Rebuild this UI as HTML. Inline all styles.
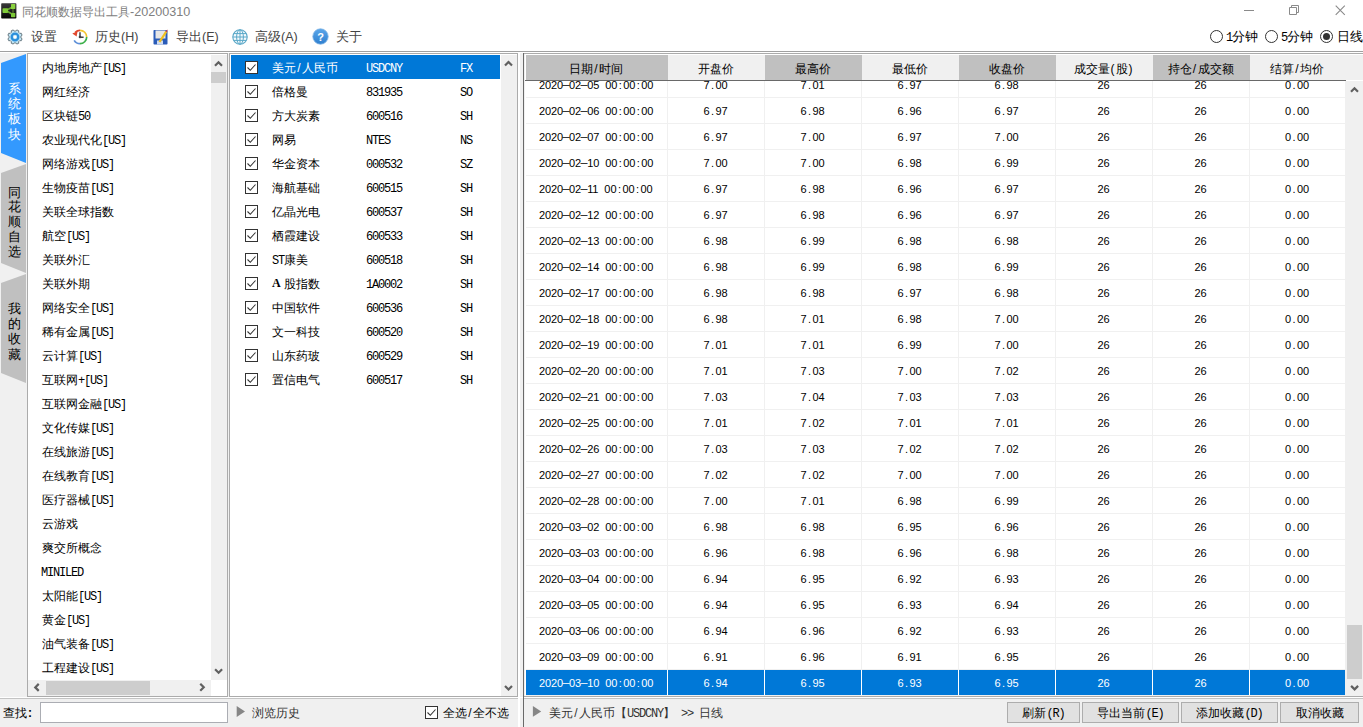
<!DOCTYPE html><html><head><meta charset="utf-8"><style>
*{margin:0;padding:0;box-sizing:border-box}
html,body{width:1363px;height:727px;overflow:hidden;background:#f0f0f0;font-family:"Liberation Sans",sans-serif;font-size:12px;color:#000}
.ab{position:absolute}
.t{position:absolute;white-space:nowrap;line-height:14px}
.cjk{font-family:"Liberation Sans",sans-serif}
.m{font-family:"Liberation Mono",monospace}
.lm{font-family:"Liberation Mono",monospace;font-size:12px;letter-spacing:-1.2px}
.c{display:inline-block;width:6px;text-align:center}
.n{font-size:11px;letter-spacing:-0.1px}

</style></head><body>
<div class="ab" style="left:0;top:0;width:1363px;height:51px;background:#fff"></div>
<div class="ab" style="left:0;top:51px;width:1363px;height:1px;background:#a0a0a0"></div>
<div class="ab" style="left:0;top:52px;width:1363px;height:1px;background:#fff"></div>
<svg class="ab" style="left:1px;top:3px" width="16" height="16" viewBox="0 0 16 16">
<defs><linearGradient id="lg" x1="0" y1="0" x2="0" y2="1"><stop offset="0" stop-color="#3a3a3a"/><stop offset="1" stop-color="#050505"/></linearGradient></defs>
<rect x="0.2" y="0.3" width="15.2" height="15.3" rx="0.8" fill="url(#lg)"/>
<path d="M5 7.5 L10.5 4.5 M5 7.5 L10.5 10.8" stroke="#6aa833" stroke-width="1.6"/>
<path d="M12 5 V11" stroke="#4a6a2a" stroke-width="1.6"/>
<rect x="10" y="1" width="4.3" height="5" rx="0.6" fill="#8ad23e"/>
<rect x="10" y="10" width="4.3" height="4.2" rx="0.6" fill="#7cc836"/>
<rect x="1.5" y="5.3" width="5.5" height="4.7" rx="0.8" fill="#80cc3a"/>
</svg>
<div class="t" style="left:22px;top:5px;font-size:12px;color:#808080">同花顺数据导出工具<span style="font-size:12.6px">-20200310</span></div>
<div class="ab" style="left:1244px;top:10px;width:10px;height:1px;background:#8a8a8a"></div>
<svg class="ab" style="left:1289px;top:5px" width="11" height="11" viewBox="0 0 11 11"><path d="M0.5 2.5h7v7h-7z M2.5 2.5v-2h7v7h-2" fill="none" stroke="#8a8a8a" stroke-width="1"/></svg>
<svg class="ab" style="left:1335px;top:5px" width="11" height="11" viewBox="0 0 11 11"><path d="M0.7 0.7L9.8 9.8M9.8 0.7L0.7 9.8" stroke="#8a8a8a" stroke-width="1.1"/></svg>
<svg class="ab" style="left:7px;top:29px" width="16" height="16" viewBox="0 0 16 16">
<path d="M13.94 8.85 L15.09 9.75 L14.25 11.77 L12.80 11.60 L11.60 12.80 L11.77 14.25 L9.75 15.09 L8.85 13.94 L7.15 13.94 L6.25 15.09 L4.23 14.25 L4.40 12.80 L3.20 11.60 L1.75 11.77 L0.91 9.75 L2.06 8.85 L2.06 7.15 L0.91 6.25 L1.75 4.23 L3.20 4.40 L4.40 3.20 L4.23 1.75 L6.25 0.91 L7.15 2.06 L8.85 2.06 L9.75 0.91 L11.77 1.75 L11.60 3.20 L12.80 4.40 L14.25 4.23 L15.09 6.25 L13.94 7.15 Z" fill="#bfe4f4" stroke="#5f6f78" stroke-width="0.9"/>
<circle cx="8" cy="8" r="3.3" fill="none" stroke="#2a8fdc" stroke-width="2.3"/><rect x="6.8" y="6.8" width="2.4" height="2.4" fill="#fff"/></svg>
<div class="t" style="left:31px;top:30px;color:#444;font-size:12.5px">设置</div>
<svg class="ab" style="left:72px;top:29px" width="16" height="16" viewBox="0 0 16 16">
<path d="M8 1.3 A6.7 6.7 0 0 1 14.7 8" fill="none" stroke="#f3c431" stroke-width="1.7"/>
<path d="M14.7 8 A6.7 6.7 0 0 1 8 14.7" fill="none" stroke="#3db04b" stroke-width="1.7"/>
<path d="M8 14.7 A6.7 6.7 0 0 1 2.2 11.3" fill="none" stroke="#5d8fd8" stroke-width="1.7"/>
<path d="M8 1.3 A6.7 6.7 0 0 0 3.2 3.3" fill="none" stroke="#e2482d" stroke-width="1.7"/>
<path d="M0.3 4.6 L5.6 2.2 L4.6 7.6 Z" fill="#e2482d"/>
<path d="M8 3.3 V8.2 H11.6" fill="none" stroke="#404040" stroke-width="1.5"/><circle cx="8" cy="8" r="1.3" fill="#404040"/></svg>
<div class="t" style="left:95px;top:30px;color:#444;font-size:12.5px">历史(H)</div>
<svg class="ab" style="left:153px;top:29px" width="16" height="16" viewBox="0 0 16 16">
<rect x="0.5" y="1" width="14" height="14.5" rx="0.8" fill="#2a5cb8"/>
<rect x="2.5" y="1.5" width="10" height="8" fill="#e6e6e6"/>
<rect x="4" y="11.5" width="6" height="4" fill="#d0dcf0"/>
<path d="M6.5 13 L13.2 2.6" stroke="#f0c020" stroke-width="2.2"/>
<path d="M12.4 2.2 L14.4 0.6 L14.2 3.3 Z" fill="#e04040"/></svg>
<div class="t" style="left:176px;top:30px;color:#444;font-size:12.5px">导出(E)</div>
<svg class="ab" style="left:232px;top:29px" width="16" height="16" viewBox="0 0 16 16">
<circle cx="8" cy="8" r="7.2" fill="#f4fafd" stroke="#5aa8c8" stroke-width="1.1"/>
<ellipse cx="8" cy="8" rx="3.4" ry="7.2" fill="none" stroke="#5aa8c8" stroke-width="1"/>
<path d="M0.8 8H15.2M1.8 4.6H14.2M1.8 11.4H14.2M8 0.8V15.2" stroke="#5aa8c8" stroke-width="1"/></svg>
<div class="t" style="left:255px;top:30px;color:#444;font-size:12.5px">高级(A)</div>
<svg class="ab" style="left:312px;top:28px" width="17" height="17" viewBox="0 0 17 17">
<defs><linearGradient id="hg" x1="0" y1="0" x2="0" y2="1"><stop offset="0" stop-color="#5aa6ea"/><stop offset="1" stop-color="#2f7fcf"/></linearGradient></defs>
<circle cx="8.5" cy="8.5" r="7.7" fill="url(#hg)" stroke="#7fb4e4" stroke-width="0.8"/>
<text x="8.5" y="12.8" text-anchor="middle" font-family="Liberation Sans" font-weight="bold" font-size="11" fill="#fff">?</text></svg>
<div class="t" style="left:336px;top:30px;color:#444;font-size:12.5px">关于</div>
<div class="ab" style="left:1210px;top:30px;width:13px;height:13px;border:1px solid #333;border-radius:50%;background:#fff"></div>
<div class="t" style="left:1226px;top:30px;font-size:12.5px"><span class="lm">1</span>分钟</div>
<div class="ab" style="left:1265px;top:30px;width:13px;height:13px;border:1px solid #333;border-radius:50%;background:#fff"></div>
<div class="t" style="left:1281px;top:30px;font-size:12.5px"><span class="lm">5</span>分钟</div>
<div class="ab" style="left:1320px;top:30px;width:13px;height:13px;border:1px solid #333;border-radius:50%;background:#fff"></div>
<div class="ab" style="left:1323px;top:33px;width:7px;height:7px;border-radius:50%;background:#333"></div>
<div class="t" style="left:1337px;top:30px;font-size:12.5px">日线</div>
<svg class="ab" style="left:0;top:54px" width="27" height="110"><path d="M1 9 L26 0 L26 109 L1 99 Z" fill="#3399fe"/></svg>
<div class="t" style="left:8px;top:82px;width:13px;font-size:13px;line-height:14px;color:#fff">系</div>
<div class="t" style="left:8px;top:97px;width:13px;font-size:13px;line-height:14px;color:#fff">统</div>
<div class="t" style="left:8px;top:112px;width:13px;font-size:13px;line-height:14px;color:#fff">板</div>
<div class="t" style="left:8px;top:128px;width:13px;font-size:13px;line-height:14px;color:#fff">块</div>
<svg class="ab" style="left:0;top:164px" width="27" height="110"><path d="M1 9 L26 0 L26 109 L1 99 Z" fill="#c0c0c0"/></svg>
<div class="t" style="left:8px;top:186px;width:13px;font-size:13px;line-height:14px;color:#000">同</div>
<div class="t" style="left:8px;top:200px;width:13px;font-size:13px;line-height:14px;color:#000">花</div>
<div class="t" style="left:8px;top:215px;width:13px;font-size:13px;line-height:14px;color:#000">顺</div>
<div class="t" style="left:8px;top:230px;width:13px;font-size:13px;line-height:14px;color:#000">自</div>
<div class="t" style="left:8px;top:245px;width:13px;font-size:13px;line-height:14px;color:#000">选</div>
<svg class="ab" style="left:0;top:274px" width="27" height="110"><path d="M1 9 L26 0 L26 109 L1 99 Z" fill="#c0c0c0"/></svg>
<div class="t" style="left:8px;top:302px;width:13px;font-size:13px;line-height:14px;color:#000">我</div>
<div class="t" style="left:8px;top:317px;width:13px;font-size:13px;line-height:14px;color:#000">的</div>
<div class="t" style="left:8px;top:332px;width:13px;font-size:13px;line-height:14px;color:#000">收</div>
<div class="t" style="left:8px;top:348px;width:13px;font-size:13px;line-height:14px;color:#000">藏</div>
<div class="ab" style="left:27px;top:53px;width:201px;height:644px;border:1px solid #ababab;background:#fff"></div>
<div class="t" style="left:42px;top:61px">内地房地产<span class="lm">[US]</span></div>
<div class="t" style="left:42px;top:85px">网红经济</div>
<div class="t" style="left:42px;top:109px">区块链<span class="lm">50</span></div>
<div class="t" style="left:42px;top:133px">农业现代化<span class="lm">[US]</span></div>
<div class="t" style="left:42px;top:157px">网络游戏<span class="lm">[US]</span></div>
<div class="t" style="left:42px;top:181px">生物疫苗<span class="lm">[US]</span></div>
<div class="t" style="left:42px;top:205px">关联全球指数</div>
<div class="t" style="left:42px;top:229px">航空<span class="lm">[US]</span></div>
<div class="t" style="left:42px;top:253px">关联外汇</div>
<div class="t" style="left:42px;top:277px">关联外期</div>
<div class="t" style="left:42px;top:301px">网络安全<span class="lm">[US]</span></div>
<div class="t" style="left:42px;top:325px">稀有金属<span class="lm">[US]</span></div>
<div class="t" style="left:42px;top:349px">云计算<span class="lm">[US]</span></div>
<div class="t" style="left:42px;top:373px">互联网<span class="lm">+[US]</span></div>
<div class="t" style="left:42px;top:397px">互联网金融<span class="lm">[US]</span></div>
<div class="t" style="left:42px;top:421px">文化传媒<span class="lm">[US]</span></div>
<div class="t" style="left:42px;top:445px">在线旅游<span class="lm">[US]</span></div>
<div class="t" style="left:42px;top:469px">在线教育<span class="lm">[US]</span></div>
<div class="t" style="left:42px;top:493px">医疗器械<span class="lm">[US]</span></div>
<div class="t" style="left:42px;top:517px">云游戏</div>
<div class="t" style="left:42px;top:541px">爽交所概念</div>
<div class="t" style="left:41px;top:565px"><span class="lm">MINILED</span></div>
<div class="t" style="left:42px;top:589px">太阳能<span class="lm">[US]</span></div>
<div class="t" style="left:42px;top:613px">黄金<span class="lm">[US]</span></div>
<div class="t" style="left:42px;top:637px">油气装备<span class="lm">[US]</span></div>
<div class="t" style="left:42px;top:661px">工程建设<span class="lm">[US]</span></div>
<div class="ab" style="left:211px;top:55px;width:16px;height:625px;background:#f0f0f0"></div>
<div class="ab" style="left:211px;top:72px;width:15px;height:11px;background:#cdcdcd"></div>
<div class="ab" style="left:28px;top:680px;width:183px;height:16px;background:#f0f0f0"></div>
<div class="ab" style="left:46px;top:681px;width:104px;height:14px;background:#cdcdcd"></div>
<div class="ab" style="left:211px;top:680px;width:16px;height:16px;background:#fff"></div>
<svg class="ab" style="left:212px;top:58px" width="12" height="12" viewBox="0 0 12 12"><g transform="translate(6.5 6)"><path d="M-3.5 1.75 L0 -1.75 L3.5 1.75" fill="none" stroke="#606060" stroke-width="2.2"/></g></svg>
<svg class="ab" style="left:212px;top:665px" width="12" height="12" viewBox="0 0 12 12"><g transform="translate(6.599999999999994 6)"><path d="M-3.5 -1.75 L0 1.75 L3.5 -1.75" fill="none" stroke="#606060" stroke-width="2.2"/></g></svg>
<svg class="ab" style="left:31px;top:681px" width="12" height="12" viewBox="0 0 12 12"><g transform="translate(6 6.399999999999977)"><path d="M1.75 -3.5 L-1.75 0 L1.75 3.5" fill="none" stroke="#606060" stroke-width="2.2"/></g></svg>
<svg class="ab" style="left:196px;top:681px" width="12" height="12" viewBox="0 0 12 12"><g transform="translate(6 6.2999999999999545)"><path d="M-1.75 -3.5 L1.75 0 L-1.75 3.5" fill="none" stroke="#606060" stroke-width="2.2"/></g></svg>
<div class="ab" style="left:229px;top:53px;width:289px;height:644px;border:1px solid #ababab;background:#fff"></div>
<div class="ab" style="left:231px;top:55px;width:269px;height:24px;background:#0078d7"></div>
<div class="ab" style="left:245px;top:61px;width:13px;height:13px;border:1px solid #333;background:#fff"></div>
<svg class="ab" style="left:246px;top:62px" width="11" height="11" viewBox="0 0 11 11"><path d="M1.5 5.5 L4.3 8.3 L9.5 2.5" fill="none" stroke="#333" stroke-width="1.1"/></svg>
<div class="t" style="left:272px;top:61px;color:#fff">美元<span class="c">/</span>人民币</div>
<div class="t m" style="left:366px;top:62px;color:#fff;font-size:12px;letter-spacing:-1.2px">USDCNY</div>
<div class="t m" style="left:460px;top:62px;color:#fff;font-size:12px;letter-spacing:-1.2px">FX</div>
<div class="ab" style="left:245px;top:85px;width:13px;height:13px;border:1px solid #333;background:#fff"></div>
<svg class="ab" style="left:246px;top:86px" width="11" height="11" viewBox="0 0 11 11"><path d="M1.5 5.5 L4.3 8.3 L9.5 2.5" fill="none" stroke="#333" stroke-width="1.1"/></svg>
<div class="t" style="left:272px;top:85px;color:#000">倍格曼</div>
<div class="t m" style="left:366px;top:86px;color:#000;font-size:12px;letter-spacing:-1.2px">831935</div>
<div class="t m" style="left:460px;top:86px;color:#000;font-size:12px;letter-spacing:-1.2px">SO</div>
<div class="ab" style="left:245px;top:109px;width:13px;height:13px;border:1px solid #333;background:#fff"></div>
<svg class="ab" style="left:246px;top:110px" width="11" height="11" viewBox="0 0 11 11"><path d="M1.5 5.5 L4.3 8.3 L9.5 2.5" fill="none" stroke="#333" stroke-width="1.1"/></svg>
<div class="t" style="left:272px;top:109px;color:#000">方大炭素</div>
<div class="t m" style="left:366px;top:110px;color:#000;font-size:12px;letter-spacing:-1.2px">600516</div>
<div class="t m" style="left:460px;top:110px;color:#000;font-size:12px;letter-spacing:-1.2px">SH</div>
<div class="ab" style="left:245px;top:133px;width:13px;height:13px;border:1px solid #333;background:#fff"></div>
<svg class="ab" style="left:246px;top:134px" width="11" height="11" viewBox="0 0 11 11"><path d="M1.5 5.5 L4.3 8.3 L9.5 2.5" fill="none" stroke="#333" stroke-width="1.1"/></svg>
<div class="t" style="left:272px;top:133px;color:#000">网易</div>
<div class="t m" style="left:366px;top:134px;color:#000;font-size:12px;letter-spacing:-1.2px">NTES</div>
<div class="t m" style="left:460px;top:134px;color:#000;font-size:12px;letter-spacing:-1.2px">NS</div>
<div class="ab" style="left:245px;top:157px;width:13px;height:13px;border:1px solid #333;background:#fff"></div>
<svg class="ab" style="left:246px;top:158px" width="11" height="11" viewBox="0 0 11 11"><path d="M1.5 5.5 L4.3 8.3 L9.5 2.5" fill="none" stroke="#333" stroke-width="1.1"/></svg>
<div class="t" style="left:272px;top:157px;color:#000">华金资本</div>
<div class="t m" style="left:366px;top:158px;color:#000;font-size:12px;letter-spacing:-1.2px">000532</div>
<div class="t m" style="left:460px;top:158px;color:#000;font-size:12px;letter-spacing:-1.2px">SZ</div>
<div class="ab" style="left:245px;top:181px;width:13px;height:13px;border:1px solid #333;background:#fff"></div>
<svg class="ab" style="left:246px;top:182px" width="11" height="11" viewBox="0 0 11 11"><path d="M1.5 5.5 L4.3 8.3 L9.5 2.5" fill="none" stroke="#333" stroke-width="1.1"/></svg>
<div class="t" style="left:272px;top:181px;color:#000">海航基础</div>
<div class="t m" style="left:366px;top:182px;color:#000;font-size:12px;letter-spacing:-1.2px">600515</div>
<div class="t m" style="left:460px;top:182px;color:#000;font-size:12px;letter-spacing:-1.2px">SH</div>
<div class="ab" style="left:245px;top:205px;width:13px;height:13px;border:1px solid #333;background:#fff"></div>
<svg class="ab" style="left:246px;top:206px" width="11" height="11" viewBox="0 0 11 11"><path d="M1.5 5.5 L4.3 8.3 L9.5 2.5" fill="none" stroke="#333" stroke-width="1.1"/></svg>
<div class="t" style="left:272px;top:205px;color:#000">亿晶光电</div>
<div class="t m" style="left:366px;top:206px;color:#000;font-size:12px;letter-spacing:-1.2px">600537</div>
<div class="t m" style="left:460px;top:206px;color:#000;font-size:12px;letter-spacing:-1.2px">SH</div>
<div class="ab" style="left:245px;top:229px;width:13px;height:13px;border:1px solid #333;background:#fff"></div>
<svg class="ab" style="left:246px;top:230px" width="11" height="11" viewBox="0 0 11 11"><path d="M1.5 5.5 L4.3 8.3 L9.5 2.5" fill="none" stroke="#333" stroke-width="1.1"/></svg>
<div class="t" style="left:272px;top:229px;color:#000">栖霞建设</div>
<div class="t m" style="left:366px;top:230px;color:#000;font-size:12px;letter-spacing:-1.2px">600533</div>
<div class="t m" style="left:460px;top:230px;color:#000;font-size:12px;letter-spacing:-1.2px">SH</div>
<div class="ab" style="left:245px;top:253px;width:13px;height:13px;border:1px solid #333;background:#fff"></div>
<svg class="ab" style="left:246px;top:254px" width="11" height="11" viewBox="0 0 11 11"><path d="M1.5 5.5 L4.3 8.3 L9.5 2.5" fill="none" stroke="#333" stroke-width="1.1"/></svg>
<div class="t" style="left:272px;top:253px;color:#000"><span class="lm">ST</span>康美</div>
<div class="t m" style="left:366px;top:254px;color:#000;font-size:12px;letter-spacing:-1.2px">600518</div>
<div class="t m" style="left:460px;top:254px;color:#000;font-size:12px;letter-spacing:-1.2px">SH</div>
<div class="ab" style="left:245px;top:277px;width:13px;height:13px;border:1px solid #333;background:#fff"></div>
<svg class="ab" style="left:246px;top:278px" width="11" height="11" viewBox="0 0 11 11"><path d="M1.5 5.5 L4.3 8.3 L9.5 2.5" fill="none" stroke="#333" stroke-width="1.1"/></svg>
<div class="t" style="left:272px;top:277px;color:#000"><span style="display:inline-block;width:12px;font:bold 12px 'Liberation Serif';position:relative;top:-1px">A</span>股指数</div>
<div class="t m" style="left:366px;top:278px;color:#000;font-size:12px;letter-spacing:-1.2px">1A0002</div>
<div class="t m" style="left:460px;top:278px;color:#000;font-size:12px;letter-spacing:-1.2px">SH</div>
<div class="ab" style="left:245px;top:301px;width:13px;height:13px;border:1px solid #333;background:#fff"></div>
<svg class="ab" style="left:246px;top:302px" width="11" height="11" viewBox="0 0 11 11"><path d="M1.5 5.5 L4.3 8.3 L9.5 2.5" fill="none" stroke="#333" stroke-width="1.1"/></svg>
<div class="t" style="left:272px;top:301px;color:#000">中国软件</div>
<div class="t m" style="left:366px;top:302px;color:#000;font-size:12px;letter-spacing:-1.2px">600536</div>
<div class="t m" style="left:460px;top:302px;color:#000;font-size:12px;letter-spacing:-1.2px">SH</div>
<div class="ab" style="left:245px;top:325px;width:13px;height:13px;border:1px solid #333;background:#fff"></div>
<svg class="ab" style="left:246px;top:326px" width="11" height="11" viewBox="0 0 11 11"><path d="M1.5 5.5 L4.3 8.3 L9.5 2.5" fill="none" stroke="#333" stroke-width="1.1"/></svg>
<div class="t" style="left:272px;top:325px;color:#000">文一科技</div>
<div class="t m" style="left:366px;top:326px;color:#000;font-size:12px;letter-spacing:-1.2px">600520</div>
<div class="t m" style="left:460px;top:326px;color:#000;font-size:12px;letter-spacing:-1.2px">SH</div>
<div class="ab" style="left:245px;top:349px;width:13px;height:13px;border:1px solid #333;background:#fff"></div>
<svg class="ab" style="left:246px;top:350px" width="11" height="11" viewBox="0 0 11 11"><path d="M1.5 5.5 L4.3 8.3 L9.5 2.5" fill="none" stroke="#333" stroke-width="1.1"/></svg>
<div class="t" style="left:272px;top:349px;color:#000">山东药玻</div>
<div class="t m" style="left:366px;top:350px;color:#000;font-size:12px;letter-spacing:-1.2px">600529</div>
<div class="t m" style="left:460px;top:350px;color:#000;font-size:12px;letter-spacing:-1.2px">SH</div>
<div class="ab" style="left:245px;top:373px;width:13px;height:13px;border:1px solid #333;background:#fff"></div>
<svg class="ab" style="left:246px;top:374px" width="11" height="11" viewBox="0 0 11 11"><path d="M1.5 5.5 L4.3 8.3 L9.5 2.5" fill="none" stroke="#333" stroke-width="1.1"/></svg>
<div class="t" style="left:272px;top:373px;color:#000">置信电气</div>
<div class="t m" style="left:366px;top:374px;color:#000;font-size:12px;letter-spacing:-1.2px">600517</div>
<div class="t m" style="left:460px;top:374px;color:#000;font-size:12px;letter-spacing:-1.2px">SH</div>
<div class="ab" style="left:501px;top:55px;width:16px;height:641px;background:#f0f0f0"></div>
<svg class="ab" style="left:502px;top:57px" width="12" height="12" viewBox="0 0 12 12"><g transform="translate(6.5 6.799999999999997)"><path d="M-3.5 1.75 L0 -1.75 L3.5 1.75" fill="none" stroke="#606060" stroke-width="2.2"/></g></svg>
<svg class="ab" style="left:502px;top:681px" width="12" height="12" viewBox="0 0 12 12"><g transform="translate(6.5 6.7999999999999545)"><path d="M-3.5 -1.75 L0 1.75 L3.5 -1.75" fill="none" stroke="#606060" stroke-width="2.2"/></g></svg>
<div class="ab" style="left:523px;top:53px;width:1px;height:674px;background:#696969"></div>
<div class="ab" style="left:524px;top:53px;width:839px;height:1px;background:#ababab"></div>
<div class="ab" style="left:525px;top:54px;width:838px;height:643px;background:#fff"></div>
<div class="ab" style="left:526px;top:55px;width:837px;height:25px;background:#f0f0f0"></div>
<div class="ab" style="left:526px;top:55px;width:142px;height:25px;background:#c0c0c0"></div>
<div class="t" style="left:525px;top:62px;width:142px;text-align:center">日期<span class="c">/</span>时间</div>
<div class="ab" style="left:668px;top:55px;width:97px;height:25px;background:#f0f0f0"></div>
<div class="t" style="left:667px;top:62px;width:97px;text-align:center">开盘价</div>
<div class="ab" style="left:765px;top:55px;width:97px;height:25px;background:#c0c0c0"></div>
<div class="t" style="left:764px;top:62px;width:97px;text-align:center">最高价</div>
<div class="ab" style="left:862px;top:55px;width:97px;height:25px;background:#f0f0f0"></div>
<div class="t" style="left:861px;top:62px;width:97px;text-align:center">最低价</div>
<div class="ab" style="left:959px;top:55px;width:97px;height:25px;background:#c0c0c0"></div>
<div class="t" style="left:958px;top:62px;width:97px;text-align:center">收盘价</div>
<div class="ab" style="left:1056px;top:55px;width:97px;height:25px;background:#f0f0f0"></div>
<div class="t" style="left:1055px;top:62px;width:97px;text-align:center">成交量<span class="c">(</span>股<span class="c">)</span></div>
<div class="ab" style="left:1153px;top:55px;width:97px;height:25px;background:#c0c0c0"></div>
<div class="t" style="left:1152px;top:62px;width:97px;text-align:center">持仓<span class="c">/</span>成交额</div>
<div class="ab" style="left:1250px;top:55px;width:96px;height:25px;background:#f0f0f0"></div>
<div class="t" style="left:1249px;top:62px;width:96px;text-align:center">结算<span class="c">/</span>均价</div>
<div class="ab" style="left:0;top:81px;width:1363px;height:615px;overflow:hidden">
<div class="t n" style="left:539px;top:-3px;color:#000">2020<span class="c" style="position:relative;top:-1.5px;transform:scaleX(1.15)">–</span>02<span class="c" style="position:relative;top:-1.5px;transform:scaleX(1.15)">–</span>05<span class="c">&nbsp;</span>00<span class="c">:</span>00<span class="c">:</span>00</div>
<div class="t n" style="left:667px;top:-3px;width:97px;text-align:center;color:#000">7<span class="c">.</span>00</div>
<div class="t n" style="left:764px;top:-3px;width:97px;text-align:center;color:#000">7<span class="c">.</span>01</div>
<div class="t n" style="left:861px;top:-3px;width:97px;text-align:center;color:#000">6<span class="c">.</span>97</div>
<div class="t n" style="left:958px;top:-3px;width:97px;text-align:center;color:#000">6<span class="c">.</span>98</div>
<div class="t n" style="left:1055px;top:-3px;width:97px;text-align:center;color:#000">26</div>
<div class="t n" style="left:1152px;top:-3px;width:97px;text-align:center;color:#000">26</div>
<div class="t n" style="left:1249px;top:-3px;width:96px;text-align:center;color:#000">0<span class="c">.</span>00</div>
<div class="ab" style="left:526px;top:16px;width:820px;height:1px;background:#f0f0f0"></div>
<div class="t n" style="left:539px;top:23px;color:#000">2020<span class="c" style="position:relative;top:-1.5px;transform:scaleX(1.15)">–</span>02<span class="c" style="position:relative;top:-1.5px;transform:scaleX(1.15)">–</span>06<span class="c">&nbsp;</span>00<span class="c">:</span>00<span class="c">:</span>00</div>
<div class="t n" style="left:667px;top:23px;width:97px;text-align:center;color:#000">6<span class="c">.</span>97</div>
<div class="t n" style="left:764px;top:23px;width:97px;text-align:center;color:#000">6<span class="c">.</span>98</div>
<div class="t n" style="left:861px;top:23px;width:97px;text-align:center;color:#000">6<span class="c">.</span>96</div>
<div class="t n" style="left:958px;top:23px;width:97px;text-align:center;color:#000">6<span class="c">.</span>97</div>
<div class="t n" style="left:1055px;top:23px;width:97px;text-align:center;color:#000">26</div>
<div class="t n" style="left:1152px;top:23px;width:97px;text-align:center;color:#000">26</div>
<div class="t n" style="left:1249px;top:23px;width:96px;text-align:center;color:#000">0<span class="c">.</span>00</div>
<div class="ab" style="left:526px;top:42px;width:820px;height:1px;background:#f0f0f0"></div>
<div class="t n" style="left:539px;top:49px;color:#000">2020<span class="c" style="position:relative;top:-1.5px;transform:scaleX(1.15)">–</span>02<span class="c" style="position:relative;top:-1.5px;transform:scaleX(1.15)">–</span>07<span class="c">&nbsp;</span>00<span class="c">:</span>00<span class="c">:</span>00</div>
<div class="t n" style="left:667px;top:49px;width:97px;text-align:center;color:#000">6<span class="c">.</span>97</div>
<div class="t n" style="left:764px;top:49px;width:97px;text-align:center;color:#000">7<span class="c">.</span>00</div>
<div class="t n" style="left:861px;top:49px;width:97px;text-align:center;color:#000">6<span class="c">.</span>97</div>
<div class="t n" style="left:958px;top:49px;width:97px;text-align:center;color:#000">7<span class="c">.</span>00</div>
<div class="t n" style="left:1055px;top:49px;width:97px;text-align:center;color:#000">26</div>
<div class="t n" style="left:1152px;top:49px;width:97px;text-align:center;color:#000">26</div>
<div class="t n" style="left:1249px;top:49px;width:96px;text-align:center;color:#000">0<span class="c">.</span>00</div>
<div class="ab" style="left:526px;top:68px;width:820px;height:1px;background:#f0f0f0"></div>
<div class="t n" style="left:539px;top:75px;color:#000">2020<span class="c" style="position:relative;top:-1.5px;transform:scaleX(1.15)">–</span>02<span class="c" style="position:relative;top:-1.5px;transform:scaleX(1.15)">–</span>10<span class="c">&nbsp;</span>00<span class="c">:</span>00<span class="c">:</span>00</div>
<div class="t n" style="left:667px;top:75px;width:97px;text-align:center;color:#000">7<span class="c">.</span>00</div>
<div class="t n" style="left:764px;top:75px;width:97px;text-align:center;color:#000">7<span class="c">.</span>00</div>
<div class="t n" style="left:861px;top:75px;width:97px;text-align:center;color:#000">6<span class="c">.</span>98</div>
<div class="t n" style="left:958px;top:75px;width:97px;text-align:center;color:#000">6<span class="c">.</span>99</div>
<div class="t n" style="left:1055px;top:75px;width:97px;text-align:center;color:#000">26</div>
<div class="t n" style="left:1152px;top:75px;width:97px;text-align:center;color:#000">26</div>
<div class="t n" style="left:1249px;top:75px;width:96px;text-align:center;color:#000">0<span class="c">.</span>00</div>
<div class="ab" style="left:526px;top:94px;width:820px;height:1px;background:#f0f0f0"></div>
<div class="t n" style="left:539px;top:101px;color:#000">2020<span class="c" style="position:relative;top:-1.5px;transform:scaleX(1.15)">–</span>02<span class="c" style="position:relative;top:-1.5px;transform:scaleX(1.15)">–</span>11<span class="c">&nbsp;</span>00<span class="c">:</span>00<span class="c">:</span>00</div>
<div class="t n" style="left:667px;top:101px;width:97px;text-align:center;color:#000">6<span class="c">.</span>97</div>
<div class="t n" style="left:764px;top:101px;width:97px;text-align:center;color:#000">6<span class="c">.</span>98</div>
<div class="t n" style="left:861px;top:101px;width:97px;text-align:center;color:#000">6<span class="c">.</span>96</div>
<div class="t n" style="left:958px;top:101px;width:97px;text-align:center;color:#000">6<span class="c">.</span>97</div>
<div class="t n" style="left:1055px;top:101px;width:97px;text-align:center;color:#000">26</div>
<div class="t n" style="left:1152px;top:101px;width:97px;text-align:center;color:#000">26</div>
<div class="t n" style="left:1249px;top:101px;width:96px;text-align:center;color:#000">0<span class="c">.</span>00</div>
<div class="ab" style="left:526px;top:120px;width:820px;height:1px;background:#f0f0f0"></div>
<div class="t n" style="left:539px;top:127px;color:#000">2020<span class="c" style="position:relative;top:-1.5px;transform:scaleX(1.15)">–</span>02<span class="c" style="position:relative;top:-1.5px;transform:scaleX(1.15)">–</span>12<span class="c">&nbsp;</span>00<span class="c">:</span>00<span class="c">:</span>00</div>
<div class="t n" style="left:667px;top:127px;width:97px;text-align:center;color:#000">6<span class="c">.</span>97</div>
<div class="t n" style="left:764px;top:127px;width:97px;text-align:center;color:#000">6<span class="c">.</span>98</div>
<div class="t n" style="left:861px;top:127px;width:97px;text-align:center;color:#000">6<span class="c">.</span>96</div>
<div class="t n" style="left:958px;top:127px;width:97px;text-align:center;color:#000">6<span class="c">.</span>97</div>
<div class="t n" style="left:1055px;top:127px;width:97px;text-align:center;color:#000">26</div>
<div class="t n" style="left:1152px;top:127px;width:97px;text-align:center;color:#000">26</div>
<div class="t n" style="left:1249px;top:127px;width:96px;text-align:center;color:#000">0<span class="c">.</span>00</div>
<div class="ab" style="left:526px;top:146px;width:820px;height:1px;background:#f0f0f0"></div>
<div class="t n" style="left:539px;top:153px;color:#000">2020<span class="c" style="position:relative;top:-1.5px;transform:scaleX(1.15)">–</span>02<span class="c" style="position:relative;top:-1.5px;transform:scaleX(1.15)">–</span>13<span class="c">&nbsp;</span>00<span class="c">:</span>00<span class="c">:</span>00</div>
<div class="t n" style="left:667px;top:153px;width:97px;text-align:center;color:#000">6<span class="c">.</span>98</div>
<div class="t n" style="left:764px;top:153px;width:97px;text-align:center;color:#000">6<span class="c">.</span>99</div>
<div class="t n" style="left:861px;top:153px;width:97px;text-align:center;color:#000">6<span class="c">.</span>98</div>
<div class="t n" style="left:958px;top:153px;width:97px;text-align:center;color:#000">6<span class="c">.</span>98</div>
<div class="t n" style="left:1055px;top:153px;width:97px;text-align:center;color:#000">26</div>
<div class="t n" style="left:1152px;top:153px;width:97px;text-align:center;color:#000">26</div>
<div class="t n" style="left:1249px;top:153px;width:96px;text-align:center;color:#000">0<span class="c">.</span>00</div>
<div class="ab" style="left:526px;top:172px;width:820px;height:1px;background:#f0f0f0"></div>
<div class="t n" style="left:539px;top:179px;color:#000">2020<span class="c" style="position:relative;top:-1.5px;transform:scaleX(1.15)">–</span>02<span class="c" style="position:relative;top:-1.5px;transform:scaleX(1.15)">–</span>14<span class="c">&nbsp;</span>00<span class="c">:</span>00<span class="c">:</span>00</div>
<div class="t n" style="left:667px;top:179px;width:97px;text-align:center;color:#000">6<span class="c">.</span>98</div>
<div class="t n" style="left:764px;top:179px;width:97px;text-align:center;color:#000">6<span class="c">.</span>99</div>
<div class="t n" style="left:861px;top:179px;width:97px;text-align:center;color:#000">6<span class="c">.</span>98</div>
<div class="t n" style="left:958px;top:179px;width:97px;text-align:center;color:#000">6<span class="c">.</span>99</div>
<div class="t n" style="left:1055px;top:179px;width:97px;text-align:center;color:#000">26</div>
<div class="t n" style="left:1152px;top:179px;width:97px;text-align:center;color:#000">26</div>
<div class="t n" style="left:1249px;top:179px;width:96px;text-align:center;color:#000">0<span class="c">.</span>00</div>
<div class="ab" style="left:526px;top:198px;width:820px;height:1px;background:#f0f0f0"></div>
<div class="t n" style="left:539px;top:205px;color:#000">2020<span class="c" style="position:relative;top:-1.5px;transform:scaleX(1.15)">–</span>02<span class="c" style="position:relative;top:-1.5px;transform:scaleX(1.15)">–</span>17<span class="c">&nbsp;</span>00<span class="c">:</span>00<span class="c">:</span>00</div>
<div class="t n" style="left:667px;top:205px;width:97px;text-align:center;color:#000">6<span class="c">.</span>98</div>
<div class="t n" style="left:764px;top:205px;width:97px;text-align:center;color:#000">6<span class="c">.</span>98</div>
<div class="t n" style="left:861px;top:205px;width:97px;text-align:center;color:#000">6<span class="c">.</span>97</div>
<div class="t n" style="left:958px;top:205px;width:97px;text-align:center;color:#000">6<span class="c">.</span>98</div>
<div class="t n" style="left:1055px;top:205px;width:97px;text-align:center;color:#000">26</div>
<div class="t n" style="left:1152px;top:205px;width:97px;text-align:center;color:#000">26</div>
<div class="t n" style="left:1249px;top:205px;width:96px;text-align:center;color:#000">0<span class="c">.</span>00</div>
<div class="ab" style="left:526px;top:224px;width:820px;height:1px;background:#f0f0f0"></div>
<div class="t n" style="left:539px;top:231px;color:#000">2020<span class="c" style="position:relative;top:-1.5px;transform:scaleX(1.15)">–</span>02<span class="c" style="position:relative;top:-1.5px;transform:scaleX(1.15)">–</span>18<span class="c">&nbsp;</span>00<span class="c">:</span>00<span class="c">:</span>00</div>
<div class="t n" style="left:667px;top:231px;width:97px;text-align:center;color:#000">6<span class="c">.</span>98</div>
<div class="t n" style="left:764px;top:231px;width:97px;text-align:center;color:#000">7<span class="c">.</span>01</div>
<div class="t n" style="left:861px;top:231px;width:97px;text-align:center;color:#000">6<span class="c">.</span>98</div>
<div class="t n" style="left:958px;top:231px;width:97px;text-align:center;color:#000">7<span class="c">.</span>00</div>
<div class="t n" style="left:1055px;top:231px;width:97px;text-align:center;color:#000">26</div>
<div class="t n" style="left:1152px;top:231px;width:97px;text-align:center;color:#000">26</div>
<div class="t n" style="left:1249px;top:231px;width:96px;text-align:center;color:#000">0<span class="c">.</span>00</div>
<div class="ab" style="left:526px;top:250px;width:820px;height:1px;background:#f0f0f0"></div>
<div class="t n" style="left:539px;top:257px;color:#000">2020<span class="c" style="position:relative;top:-1.5px;transform:scaleX(1.15)">–</span>02<span class="c" style="position:relative;top:-1.5px;transform:scaleX(1.15)">–</span>19<span class="c">&nbsp;</span>00<span class="c">:</span>00<span class="c">:</span>00</div>
<div class="t n" style="left:667px;top:257px;width:97px;text-align:center;color:#000">7<span class="c">.</span>01</div>
<div class="t n" style="left:764px;top:257px;width:97px;text-align:center;color:#000">7<span class="c">.</span>01</div>
<div class="t n" style="left:861px;top:257px;width:97px;text-align:center;color:#000">6<span class="c">.</span>99</div>
<div class="t n" style="left:958px;top:257px;width:97px;text-align:center;color:#000">7<span class="c">.</span>00</div>
<div class="t n" style="left:1055px;top:257px;width:97px;text-align:center;color:#000">26</div>
<div class="t n" style="left:1152px;top:257px;width:97px;text-align:center;color:#000">26</div>
<div class="t n" style="left:1249px;top:257px;width:96px;text-align:center;color:#000">0<span class="c">.</span>00</div>
<div class="ab" style="left:526px;top:276px;width:820px;height:1px;background:#f0f0f0"></div>
<div class="t n" style="left:539px;top:283px;color:#000">2020<span class="c" style="position:relative;top:-1.5px;transform:scaleX(1.15)">–</span>02<span class="c" style="position:relative;top:-1.5px;transform:scaleX(1.15)">–</span>20<span class="c">&nbsp;</span>00<span class="c">:</span>00<span class="c">:</span>00</div>
<div class="t n" style="left:667px;top:283px;width:97px;text-align:center;color:#000">7<span class="c">.</span>01</div>
<div class="t n" style="left:764px;top:283px;width:97px;text-align:center;color:#000">7<span class="c">.</span>03</div>
<div class="t n" style="left:861px;top:283px;width:97px;text-align:center;color:#000">7<span class="c">.</span>00</div>
<div class="t n" style="left:958px;top:283px;width:97px;text-align:center;color:#000">7<span class="c">.</span>02</div>
<div class="t n" style="left:1055px;top:283px;width:97px;text-align:center;color:#000">26</div>
<div class="t n" style="left:1152px;top:283px;width:97px;text-align:center;color:#000">26</div>
<div class="t n" style="left:1249px;top:283px;width:96px;text-align:center;color:#000">0<span class="c">.</span>00</div>
<div class="ab" style="left:526px;top:302px;width:820px;height:1px;background:#f0f0f0"></div>
<div class="t n" style="left:539px;top:309px;color:#000">2020<span class="c" style="position:relative;top:-1.5px;transform:scaleX(1.15)">–</span>02<span class="c" style="position:relative;top:-1.5px;transform:scaleX(1.15)">–</span>21<span class="c">&nbsp;</span>00<span class="c">:</span>00<span class="c">:</span>00</div>
<div class="t n" style="left:667px;top:309px;width:97px;text-align:center;color:#000">7<span class="c">.</span>03</div>
<div class="t n" style="left:764px;top:309px;width:97px;text-align:center;color:#000">7<span class="c">.</span>04</div>
<div class="t n" style="left:861px;top:309px;width:97px;text-align:center;color:#000">7<span class="c">.</span>03</div>
<div class="t n" style="left:958px;top:309px;width:97px;text-align:center;color:#000">7<span class="c">.</span>03</div>
<div class="t n" style="left:1055px;top:309px;width:97px;text-align:center;color:#000">26</div>
<div class="t n" style="left:1152px;top:309px;width:97px;text-align:center;color:#000">26</div>
<div class="t n" style="left:1249px;top:309px;width:96px;text-align:center;color:#000">0<span class="c">.</span>00</div>
<div class="ab" style="left:526px;top:328px;width:820px;height:1px;background:#f0f0f0"></div>
<div class="t n" style="left:539px;top:335px;color:#000">2020<span class="c" style="position:relative;top:-1.5px;transform:scaleX(1.15)">–</span>02<span class="c" style="position:relative;top:-1.5px;transform:scaleX(1.15)">–</span>25<span class="c">&nbsp;</span>00<span class="c">:</span>00<span class="c">:</span>00</div>
<div class="t n" style="left:667px;top:335px;width:97px;text-align:center;color:#000">7<span class="c">.</span>01</div>
<div class="t n" style="left:764px;top:335px;width:97px;text-align:center;color:#000">7<span class="c">.</span>02</div>
<div class="t n" style="left:861px;top:335px;width:97px;text-align:center;color:#000">7<span class="c">.</span>01</div>
<div class="t n" style="left:958px;top:335px;width:97px;text-align:center;color:#000">7<span class="c">.</span>01</div>
<div class="t n" style="left:1055px;top:335px;width:97px;text-align:center;color:#000">26</div>
<div class="t n" style="left:1152px;top:335px;width:97px;text-align:center;color:#000">26</div>
<div class="t n" style="left:1249px;top:335px;width:96px;text-align:center;color:#000">0<span class="c">.</span>00</div>
<div class="ab" style="left:526px;top:354px;width:820px;height:1px;background:#f0f0f0"></div>
<div class="t n" style="left:539px;top:361px;color:#000">2020<span class="c" style="position:relative;top:-1.5px;transform:scaleX(1.15)">–</span>02<span class="c" style="position:relative;top:-1.5px;transform:scaleX(1.15)">–</span>26<span class="c">&nbsp;</span>00<span class="c">:</span>00<span class="c">:</span>00</div>
<div class="t n" style="left:667px;top:361px;width:97px;text-align:center;color:#000">7<span class="c">.</span>03</div>
<div class="t n" style="left:764px;top:361px;width:97px;text-align:center;color:#000">7<span class="c">.</span>03</div>
<div class="t n" style="left:861px;top:361px;width:97px;text-align:center;color:#000">7<span class="c">.</span>02</div>
<div class="t n" style="left:958px;top:361px;width:97px;text-align:center;color:#000">7<span class="c">.</span>02</div>
<div class="t n" style="left:1055px;top:361px;width:97px;text-align:center;color:#000">26</div>
<div class="t n" style="left:1152px;top:361px;width:97px;text-align:center;color:#000">26</div>
<div class="t n" style="left:1249px;top:361px;width:96px;text-align:center;color:#000">0<span class="c">.</span>00</div>
<div class="ab" style="left:526px;top:380px;width:820px;height:1px;background:#f0f0f0"></div>
<div class="t n" style="left:539px;top:387px;color:#000">2020<span class="c" style="position:relative;top:-1.5px;transform:scaleX(1.15)">–</span>02<span class="c" style="position:relative;top:-1.5px;transform:scaleX(1.15)">–</span>27<span class="c">&nbsp;</span>00<span class="c">:</span>00<span class="c">:</span>00</div>
<div class="t n" style="left:667px;top:387px;width:97px;text-align:center;color:#000">7<span class="c">.</span>02</div>
<div class="t n" style="left:764px;top:387px;width:97px;text-align:center;color:#000">7<span class="c">.</span>02</div>
<div class="t n" style="left:861px;top:387px;width:97px;text-align:center;color:#000">7<span class="c">.</span>00</div>
<div class="t n" style="left:958px;top:387px;width:97px;text-align:center;color:#000">7<span class="c">.</span>00</div>
<div class="t n" style="left:1055px;top:387px;width:97px;text-align:center;color:#000">26</div>
<div class="t n" style="left:1152px;top:387px;width:97px;text-align:center;color:#000">26</div>
<div class="t n" style="left:1249px;top:387px;width:96px;text-align:center;color:#000">0<span class="c">.</span>00</div>
<div class="ab" style="left:526px;top:406px;width:820px;height:1px;background:#f0f0f0"></div>
<div class="t n" style="left:539px;top:413px;color:#000">2020<span class="c" style="position:relative;top:-1.5px;transform:scaleX(1.15)">–</span>02<span class="c" style="position:relative;top:-1.5px;transform:scaleX(1.15)">–</span>28<span class="c">&nbsp;</span>00<span class="c">:</span>00<span class="c">:</span>00</div>
<div class="t n" style="left:667px;top:413px;width:97px;text-align:center;color:#000">7<span class="c">.</span>00</div>
<div class="t n" style="left:764px;top:413px;width:97px;text-align:center;color:#000">7<span class="c">.</span>01</div>
<div class="t n" style="left:861px;top:413px;width:97px;text-align:center;color:#000">6<span class="c">.</span>98</div>
<div class="t n" style="left:958px;top:413px;width:97px;text-align:center;color:#000">6<span class="c">.</span>99</div>
<div class="t n" style="left:1055px;top:413px;width:97px;text-align:center;color:#000">26</div>
<div class="t n" style="left:1152px;top:413px;width:97px;text-align:center;color:#000">26</div>
<div class="t n" style="left:1249px;top:413px;width:96px;text-align:center;color:#000">0<span class="c">.</span>00</div>
<div class="ab" style="left:526px;top:432px;width:820px;height:1px;background:#f0f0f0"></div>
<div class="t n" style="left:539px;top:439px;color:#000">2020<span class="c" style="position:relative;top:-1.5px;transform:scaleX(1.15)">–</span>03<span class="c" style="position:relative;top:-1.5px;transform:scaleX(1.15)">–</span>02<span class="c">&nbsp;</span>00<span class="c">:</span>00<span class="c">:</span>00</div>
<div class="t n" style="left:667px;top:439px;width:97px;text-align:center;color:#000">6<span class="c">.</span>98</div>
<div class="t n" style="left:764px;top:439px;width:97px;text-align:center;color:#000">6<span class="c">.</span>98</div>
<div class="t n" style="left:861px;top:439px;width:97px;text-align:center;color:#000">6<span class="c">.</span>95</div>
<div class="t n" style="left:958px;top:439px;width:97px;text-align:center;color:#000">6<span class="c">.</span>96</div>
<div class="t n" style="left:1055px;top:439px;width:97px;text-align:center;color:#000">26</div>
<div class="t n" style="left:1152px;top:439px;width:97px;text-align:center;color:#000">26</div>
<div class="t n" style="left:1249px;top:439px;width:96px;text-align:center;color:#000">0<span class="c">.</span>00</div>
<div class="ab" style="left:526px;top:458px;width:820px;height:1px;background:#f0f0f0"></div>
<div class="t n" style="left:539px;top:465px;color:#000">2020<span class="c" style="position:relative;top:-1.5px;transform:scaleX(1.15)">–</span>03<span class="c" style="position:relative;top:-1.5px;transform:scaleX(1.15)">–</span>03<span class="c">&nbsp;</span>00<span class="c">:</span>00<span class="c">:</span>00</div>
<div class="t n" style="left:667px;top:465px;width:97px;text-align:center;color:#000">6<span class="c">.</span>96</div>
<div class="t n" style="left:764px;top:465px;width:97px;text-align:center;color:#000">6<span class="c">.</span>98</div>
<div class="t n" style="left:861px;top:465px;width:97px;text-align:center;color:#000">6<span class="c">.</span>96</div>
<div class="t n" style="left:958px;top:465px;width:97px;text-align:center;color:#000">6<span class="c">.</span>98</div>
<div class="t n" style="left:1055px;top:465px;width:97px;text-align:center;color:#000">26</div>
<div class="t n" style="left:1152px;top:465px;width:97px;text-align:center;color:#000">26</div>
<div class="t n" style="left:1249px;top:465px;width:96px;text-align:center;color:#000">0<span class="c">.</span>00</div>
<div class="ab" style="left:526px;top:484px;width:820px;height:1px;background:#f0f0f0"></div>
<div class="t n" style="left:539px;top:491px;color:#000">2020<span class="c" style="position:relative;top:-1.5px;transform:scaleX(1.15)">–</span>03<span class="c" style="position:relative;top:-1.5px;transform:scaleX(1.15)">–</span>04<span class="c">&nbsp;</span>00<span class="c">:</span>00<span class="c">:</span>00</div>
<div class="t n" style="left:667px;top:491px;width:97px;text-align:center;color:#000">6<span class="c">.</span>94</div>
<div class="t n" style="left:764px;top:491px;width:97px;text-align:center;color:#000">6<span class="c">.</span>95</div>
<div class="t n" style="left:861px;top:491px;width:97px;text-align:center;color:#000">6<span class="c">.</span>92</div>
<div class="t n" style="left:958px;top:491px;width:97px;text-align:center;color:#000">6<span class="c">.</span>93</div>
<div class="t n" style="left:1055px;top:491px;width:97px;text-align:center;color:#000">26</div>
<div class="t n" style="left:1152px;top:491px;width:97px;text-align:center;color:#000">26</div>
<div class="t n" style="left:1249px;top:491px;width:96px;text-align:center;color:#000">0<span class="c">.</span>00</div>
<div class="ab" style="left:526px;top:510px;width:820px;height:1px;background:#f0f0f0"></div>
<div class="t n" style="left:539px;top:517px;color:#000">2020<span class="c" style="position:relative;top:-1.5px;transform:scaleX(1.15)">–</span>03<span class="c" style="position:relative;top:-1.5px;transform:scaleX(1.15)">–</span>05<span class="c">&nbsp;</span>00<span class="c">:</span>00<span class="c">:</span>00</div>
<div class="t n" style="left:667px;top:517px;width:97px;text-align:center;color:#000">6<span class="c">.</span>94</div>
<div class="t n" style="left:764px;top:517px;width:97px;text-align:center;color:#000">6<span class="c">.</span>95</div>
<div class="t n" style="left:861px;top:517px;width:97px;text-align:center;color:#000">6<span class="c">.</span>93</div>
<div class="t n" style="left:958px;top:517px;width:97px;text-align:center;color:#000">6<span class="c">.</span>94</div>
<div class="t n" style="left:1055px;top:517px;width:97px;text-align:center;color:#000">26</div>
<div class="t n" style="left:1152px;top:517px;width:97px;text-align:center;color:#000">26</div>
<div class="t n" style="left:1249px;top:517px;width:96px;text-align:center;color:#000">0<span class="c">.</span>00</div>
<div class="ab" style="left:526px;top:536px;width:820px;height:1px;background:#f0f0f0"></div>
<div class="t n" style="left:539px;top:543px;color:#000">2020<span class="c" style="position:relative;top:-1.5px;transform:scaleX(1.15)">–</span>03<span class="c" style="position:relative;top:-1.5px;transform:scaleX(1.15)">–</span>06<span class="c">&nbsp;</span>00<span class="c">:</span>00<span class="c">:</span>00</div>
<div class="t n" style="left:667px;top:543px;width:97px;text-align:center;color:#000">6<span class="c">.</span>94</div>
<div class="t n" style="left:764px;top:543px;width:97px;text-align:center;color:#000">6<span class="c">.</span>96</div>
<div class="t n" style="left:861px;top:543px;width:97px;text-align:center;color:#000">6<span class="c">.</span>92</div>
<div class="t n" style="left:958px;top:543px;width:97px;text-align:center;color:#000">6<span class="c">.</span>93</div>
<div class="t n" style="left:1055px;top:543px;width:97px;text-align:center;color:#000">26</div>
<div class="t n" style="left:1152px;top:543px;width:97px;text-align:center;color:#000">26</div>
<div class="t n" style="left:1249px;top:543px;width:96px;text-align:center;color:#000">0<span class="c">.</span>00</div>
<div class="ab" style="left:526px;top:562px;width:820px;height:1px;background:#f0f0f0"></div>
<div class="t n" style="left:539px;top:569px;color:#000">2020<span class="c" style="position:relative;top:-1.5px;transform:scaleX(1.15)">–</span>03<span class="c" style="position:relative;top:-1.5px;transform:scaleX(1.15)">–</span>09<span class="c">&nbsp;</span>00<span class="c">:</span>00<span class="c">:</span>00</div>
<div class="t n" style="left:667px;top:569px;width:97px;text-align:center;color:#000">6<span class="c">.</span>91</div>
<div class="t n" style="left:764px;top:569px;width:97px;text-align:center;color:#000">6<span class="c">.</span>96</div>
<div class="t n" style="left:861px;top:569px;width:97px;text-align:center;color:#000">6<span class="c">.</span>91</div>
<div class="t n" style="left:958px;top:569px;width:97px;text-align:center;color:#000">6<span class="c">.</span>95</div>
<div class="t n" style="left:1055px;top:569px;width:97px;text-align:center;color:#000">26</div>
<div class="t n" style="left:1152px;top:569px;width:97px;text-align:center;color:#000">26</div>
<div class="t n" style="left:1249px;top:569px;width:96px;text-align:center;color:#000">0<span class="c">.</span>00</div>
<div class="ab" style="left:526px;top:588px;width:820px;height:1px;background:#f0f0f0"></div>
<div class="ab" style="left:526px;top:589px;width:819px;height:25px;background:#0078d7"></div>
<div class="t n" style="left:539px;top:595px;color:#fff">2020<span class="c" style="position:relative;top:-1.5px;transform:scaleX(1.15)">–</span>03<span class="c" style="position:relative;top:-1.5px;transform:scaleX(1.15)">–</span>10<span class="c">&nbsp;</span>00<span class="c">:</span>00<span class="c">:</span>00</div>
<div class="t n" style="left:667px;top:595px;width:97px;text-align:center;color:#fff">6<span class="c">.</span>94</div>
<div class="t n" style="left:764px;top:595px;width:97px;text-align:center;color:#fff">6<span class="c">.</span>95</div>
<div class="t n" style="left:861px;top:595px;width:97px;text-align:center;color:#fff">6<span class="c">.</span>93</div>
<div class="t n" style="left:958px;top:595px;width:97px;text-align:center;color:#fff">6<span class="c">.</span>95</div>
<div class="t n" style="left:1055px;top:595px;width:97px;text-align:center;color:#fff">26</div>
<div class="t n" style="left:1152px;top:595px;width:97px;text-align:center;color:#fff">26</div>
<div class="t n" style="left:1249px;top:595px;width:96px;text-align:center;color:#fff">0<span class="c">.</span>00</div>
<div class="ab" style="left:526px;top:614px;width:820px;height:1px;background:#f0f0f0"></div>
<div class="ab" style="left:667px;top:0px;width:1px;height:615px;background:#f0f0f0"></div>
<div class="ab" style="left:667px;top:589px;width:1px;height:25px;background:#fff"></div>
<div class="ab" style="left:764px;top:0px;width:1px;height:615px;background:#f0f0f0"></div>
<div class="ab" style="left:764px;top:589px;width:1px;height:25px;background:#fff"></div>
<div class="ab" style="left:861px;top:0px;width:1px;height:615px;background:#f0f0f0"></div>
<div class="ab" style="left:861px;top:589px;width:1px;height:25px;background:#fff"></div>
<div class="ab" style="left:958px;top:0px;width:1px;height:615px;background:#f0f0f0"></div>
<div class="ab" style="left:958px;top:589px;width:1px;height:25px;background:#fff"></div>
<div class="ab" style="left:1055px;top:0px;width:1px;height:615px;background:#f0f0f0"></div>
<div class="ab" style="left:1055px;top:589px;width:1px;height:25px;background:#fff"></div>
<div class="ab" style="left:1152px;top:0px;width:1px;height:615px;background:#f0f0f0"></div>
<div class="ab" style="left:1152px;top:589px;width:1px;height:25px;background:#fff"></div>
<div class="ab" style="left:1249px;top:0px;width:1px;height:615px;background:#f0f0f0"></div>
<div class="ab" style="left:1249px;top:589px;width:1px;height:25px;background:#fff"></div>
</div>
<div class="ab" style="left:525px;top:80px;width:821px;height:1px;background:#696969"></div>
<div class="ab" style="left:1345px;top:81px;width:18px;height:615px;background:#f0f0f0"></div>
<div class="ab" style="left:1347px;top:625px;width:15px;height:54px;background:#cdcdcd"></div>
<svg class="ab" style="left:1348px;top:84px" width="12" height="12" viewBox="0 0 12 12"><g transform="translate(6.5 6)"><path d="M-3.5 1.75 L0 -1.75 L3.5 1.75" fill="none" stroke="#606060" stroke-width="2.2"/></g></svg>
<svg class="ab" style="left:1348px;top:681px" width="12" height="12" viewBox="0 0 12 12"><g transform="translate(6.599999999999909 6.600000000000023)"><path d="M-3.5 -1.75 L0 1.75 L3.5 -1.75" fill="none" stroke="#606060" stroke-width="2.2"/></g></svg>
<div class="ab" style="left:524px;top:696px;width:839px;height:1px;background:#ababab"></div>
<div class="ab" style="left:0;top:697px;width:1363px;height:1px;background:#fff"></div>
<div class="ab" style="left:0;top:698px;width:519px;height:1px;background:#c4c4c4"></div>
<div class="ab" style="left:524px;top:698px;width:839px;height:1px;background:#c4c4c4"></div>
<div class="ab" style="left:518px;top:53px;width:2px;height:674px;background:#fff"></div>
<div class="ab" style="left:523px;top:53px;width:1px;height:674px;background:#696969"></div>
<div class="t" style="left:3px;top:706px">查找<span class="c" style="font-weight:bold">:</span></div>
<div class="ab" style="left:40px;top:702px;width:188px;height:21px;border:1px solid #abadb3;background:#fff"></div>
<svg class="ab" style="left:236px;top:706px" width="10" height="12"><path d="M0.7 0 L9 5.5 L0.7 11 Z" fill="#868686"/></svg>
<div class="t" style="left:252px;top:706px;color:#333">浏览历史</div>
<div class="ab" style="left:425px;top:706px;width:13px;height:13px;border:1px solid #333;background:#fff"></div>
<svg class="ab" style="left:426px;top:707px" width="11" height="11" viewBox="0 0 11 11"><path d="M1.5 5.5 L4.3 8.3 L9.5 2.5" fill="none" stroke="#333" stroke-width="1.1"/></svg>
<div class="t" style="left:443px;top:706px">全选<span class="c">/</span>全不选</div>
<svg class="ab" style="left:532px;top:706px" width="10" height="12"><path d="M0.9 0 L9.2 5.4 L0.9 10.8 Z" fill="#868686"/></svg>
<div class="t" style="left:549px;top:706px;color:#333">美元<span class="c">/</span>人民币【<span class="lm">USDCNY</span>】<span class="c"></span><span class="lm" style="display:inline-block;width:12px">&gt;&gt;</span><span class="c"></span>日线</div>
<div class="ab" style="left:1007px;top:702px;width:73px;height:21px;border:1px solid #adadad;background:#e1e1e1"></div>
<div class="t" style="left:1007px;top:706px;width:73px;text-align:center">刷新<span class="lm">(R)</span></div>
<div class="ab" style="left:1082px;top:702px;width:97px;height:21px;border:1px solid #adadad;background:#e1e1e1"></div>
<div class="t" style="left:1082px;top:706px;width:97px;text-align:center">导出当前<span class="lm">(E)</span></div>
<div class="ab" style="left:1181px;top:702px;width:97px;height:21px;border:1px solid #adadad;background:#e1e1e1"></div>
<div class="t" style="left:1181px;top:706px;width:97px;text-align:center">添加收藏<span class="lm">(D)</span></div>
<div class="ab" style="left:1280px;top:702px;width:79px;height:21px;border:1px solid #adadad;background:#e1e1e1"></div>
<div class="t" style="left:1280px;top:706px;width:79px;text-align:center">取消收藏</div>
</body></html>
